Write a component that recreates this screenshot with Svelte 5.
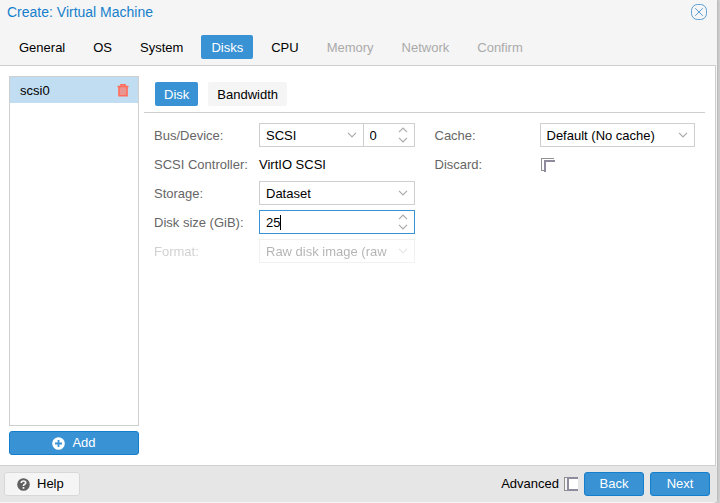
<script>
  const steps = [
    { name: 'General' },
    { name: 'OS' },
    { name: 'System' },
    { name: 'Disks', active: true },
    { name: 'CPU' },
    { name: 'Memory', disabled: true },
    { name: 'Network', disabled: true },
    { name: 'Confirm', disabled: true },
  ];
  let bus = $state('SCSI');
  let device = $state('0');
  let storage = $state('Dataset');
  let size = $state('25');
  let cache = $state('Default (No cache)');
  let discard = $state(false);
  let advanced = $state(false);
  let sizeInput;

  $effect(() => {
    sizeInput.focus();
    sizeInput.setSelectionRange(size.length, size.length);
  });
</script>

{#snippet chevron()}
  <svg class="arrow" width="10" height="6" viewBox="0 0 10 6" aria-hidden="true"><path d="M1 .8l4 4 4-4" /></svg>
{/snippet}

{#snippet spinner()}
  <svg class="arrow" width="10" height="16" viewBox="0 0 10 16" aria-hidden="true"><path d="M1 5.2l4-4 4 4M1 10.8l4 4 4-4" /></svg>
{/snippet}

<div class="page">
  <div class="dialog" role="dialog" aria-labelledby="title">
    <header>
      <h1 id="title">Create: Virtual Machine</h1>
      <button class="close" aria-label="Close">
        <svg width="16" height="16" viewBox="0 0 16 16"><rect x=".5" y=".5" width="15" height="15" rx="6" /><path d="M4.2 4.2l7.6 7.6M11.8 4.2l-7.6 7.6" /></svg>
      </button>
    </header>

    <nav>
      {#each steps as step}
        <button class="tab" class:active={step.active} disabled={step.disabled}>{step.name}</button>
      {/each}
    </nav>

    <main>
      <aside>
        <ul>
          <li>
            <span>scsi0</span>
            <button class="trash" aria-label="Remove scsi0">
              <svg width="12" height="13" viewBox="0 0 12 13"><path class="fill" d="M2 3h8v9H2z" /><path d="M.5 2.5h11M4 2V.8h4V2M2 3v8.7h8V3" /></svg>
            </button>
          </li>
        </ul>
        <button class="primary">
          <svg width="13" height="13" viewBox="0 0 13 13"><circle cx="6.5" cy="6.5" r="6.3" fill="#fff" /><path d="M6.5 3v7M3 6.5h7" stroke="#3892d4" stroke-width="1.8" /></svg>
          Add
        </button>
      </aside>

      <section>
        <div class="subtabs">
          <button class="tab active">Disk</button>
          <button class="tab idle">Bandwidth</button>
        </div>

        <form>
          <div class="column">
            <div class="row">
              <label for="bus">Bus/Device:</label>
              <div class="control">
                <div class="field bus"><select id="bus" bind:value={bus}><option>SCSI</option></select>{@render chevron()}</div>
                <div class="field device"><input aria-label="Device number" bind:value={device} />{@render spinner()}</div>
              </div>
            </div>
            <div class="row">
              <span class="name">SCSI Controller:</span>
              <span class="control">VirtIO SCSI</span>
            </div>
            <div class="row">
              <label for="storage">Storage:</label>
              <div class="control">
                <div class="field"><select id="storage" bind:value={storage}><option>Dataset</option></select>{@render chevron()}</div>
              </div>
            </div>
            <div class="row">
              <label for="size">Disk size (GiB):</label>
              <div class="control">
                <div class="field">
                  <input id="size" bind:value={size} bind:this={sizeInput} />
                  <span class="caret" style="left: calc(7px + {size.length}ch)"></span>
                  {@render spinner()}
                </div>
              </div>
            </div>
            <div class="row off">
              <label for="format">Format:</label>
              <div class="control">
                <div class="field"><select id="format" disabled><option>Raw disk image (raw</option></select>{@render chevron()}</div>
              </div>
            </div>
          </div>

          <div class="column">
            <div class="row">
              <label for="cache">Cache:</label>
              <div class="control">
                <div class="field"><select id="cache" bind:value={cache}><option>Default (No cache)</option></select>{@render chevron()}</div>
              </div>
            </div>
            <div class="row">
              <label for="discard">Discard:</label>
              <div class="control"><input id="discard" class="check corner" type="checkbox" bind:checked={discard} /></div>
            </div>
          </div>
        </form>
      </section>
    </main>

    <footer>
      <button class="help">
        <svg width="13" height="13" viewBox="0 0 13 13"><circle cx="6.5" cy="6.5" r="6.3" fill="#606060" /><path d="M4.3 5q0-2 2.2-2t2.2 1.8q0 1-1.1 1.5T6.5 8M6.5 9v1.8" fill="none" stroke="#f5f5f5" stroke-width="1.7" /></svg>
        Help
      </button>
      <label class="advanced">Advanced <input class="check" type="checkbox" bind:checked={advanced} /></label>
      <button class="primary">Back</button>
      <button class="primary">Next</button>
    </footer>
  </div>
</div>

<style>
  :global(body) {
    background: #d0d0d0;
  }
  .page,
  .page *,
  .page *::before {
    box-sizing: border-box;
  }
  .page {
    display: flex;
    min-height: 100vh;
    padding-right: 3px;
    font: 13px/16px "Liberation Sans", Arial, sans-serif;
    color: #000;
  }
  button,
  input,
  select {
    font: inherit;
    color: inherit;
    margin: 0;
  }
  button {
    cursor: pointer;
  }
  svg {
    flex: none;
    display: block;
  }
  .dialog {
    flex: 1;
    display: flex;
    flex-direction: column;
    min-width: 0;
    padding-bottom: 1px;
    background: #f5f5f5;
    border-radius: 0 0 4px 0;
    box-shadow: 0 0 3px #999;
  }
  header {
    display: flex;
    align-items: center;
    justify-content: space-between;
    height: 24px;
    padding: 0 10px 0 7px;
  }
  h1 {
    margin: 0;
    font-size: 14px;
    font-weight: normal;
    color: #157fcc;
  }
  .close,
  .trash {
    padding: 0;
    border: 0;
    background: none;
  }
  .close svg {
    fill: none;
    stroke: #5a9fd4;
  }
  nav {
    display: flex;
    gap: 8px;
    height: 41px;
    padding: 11px 9px 0;
  }
  .tab {
    height: 24px;
    padding: 2px 9px 0;
    border: 1px solid transparent;
    border-radius: 2px;
    background: none;
  }
  .tab:disabled {
    color: #aaa;
  }
  .tab.active {
    background: #3892d4;
    color: #fff;
  }
  .tab.idle {
    background: #f5f5f5;
  }
  main {
    flex: 1;
    display: flex;
    gap: 5px;
    margin-right: 1px;
    padding: 10px 10px 10px 9px;
    border: 1px solid #cfcfcf;
    border-left: 0;
    background: #fff;
  }
  aside {
    flex: none;
    display: flex;
    flex-direction: column;
    gap: 5px;
    width: 130px;
  }
  ul {
    flex: 1;
    margin: 0;
    padding: 0;
    border: 1px solid #cfcfcf;
    list-style: none;
  }
  li {
    display: flex;
    align-items: center;
    justify-content: space-between;
    height: 26px;
    padding: 0 9px 0 10px;
    background: #c1ddf1;
  }
  li span {
    padding-top: 2px;
  }
  .trash svg {
    fill: none;
    stroke: #ff6c59;
    stroke-width: 1.6;
  }
  .trash .fill {
    fill: #ea9590;
    stroke: none;
  }
  .primary {
    display: flex;
    align-items: center;
    justify-content: center;
    gap: 7px;
    height: 24px;
    padding: 0;
    border: 1px solid #157fcc;
    border-radius: 3px;
    background: #3892d4;
    color: #fff;
  }
  section {
    flex: 1;
    min-width: 0;
  }
  .subtabs {
    display: flex;
    gap: 10px;
    height: 37px;
    padding: 6px 11px 0;
    border-bottom: 1px solid #cfcfcf;
  }
  .subtabs .tab {
    padding: 2px 8px 0;
  }
  form {
    display: flex;
    gap: 20px;
    padding: 10px 10px 0;
  }
  .column {
    flex: 1;
    display: flex;
    flex-direction: column;
    gap: 5px;
    min-width: 0;
  }
  .row {
    display: flex;
    align-items: center;
    height: 24px;
  }
  .row label,
  .name {
    flex: none;
    width: 105px;
    padding-top: 2px;
    color: #666;
  }
  .control {
    flex: 1;
    display: flex;
    min-width: 0;
  }
  span.control {
    padding-top: 2px;
  }
  .field {
    position: relative;
    flex: 1;
    min-width: 0;
    height: 24px;
  }
  .device {
    flex: none;
    width: 52px;
    margin-left: -1px;
  }
  .field input,
  .field select {
    display: block;
    width: 100%;
    height: 24px;
    padding: 0 24px 0 6px;
    border: 1px solid #cfcfcf;
    border-radius: 0;
    outline: 0;
    background: #fff;
    appearance: none;
  }
  .field select {
    padding-top: 2px;
  }
  .field input:focus {
    border-color: #3892d4;
    caret-color: transparent;
  }
  .caret {
    display: none;
    position: absolute;
    top: 5px;
    width: 1px;
    height: 15px;
    background: #000;
    pointer-events: none;
  }
  input:focus + .caret {
    display: block;
  }
  .arrow {
    position: absolute;
    top: 0;
    right: 7px;
    bottom: 0;
    margin: auto 0;
    fill: none;
    stroke: #aaa;
    stroke-width: 1.2;
    pointer-events: none;
  }
  .off {
    opacity: 0.3;
  }
  .off select {
    color: #000;
    opacity: 1;
  }
  .check {
    position: relative;
    flex: none;
    width: 14px;
    height: 14px;
    border: 1px solid #919191;
    border-right: 0;
    appearance: none;
    background: #f5f5f5;
  }
  .check::before {
    content: "";
    position: absolute;
    top: -1px;
    left: 2px;
    width: 11px;
    height: 14px;
    border: solid #8f8b9c;
    border-width: 2px 0 2px 2px;
    background: #fff;
  }
  .check.corner {
    width: 13px;
    height: 13px;
    margin-left: 1px;
    background: #fff;
  }
  .check.corner::before {
    top: 1px;
    height: 12px;
    border-bottom: 0;
  }
  footer {
    display: flex;
    align-items: center;
    gap: 6px;
    height: 36px;
    padding: 0 7px 0 4px;
    background: #e6e6e6;
  }
  .help {
    display: flex;
    align-items: center;
    gap: 7px;
    height: 24px;
    margin-right: auto;
    padding: 0 15px 0 12px;
    border: 1px solid #d8d8d8;
    border-radius: 3px;
    background: #f5f5f5;
  }
  .advanced {
    display: flex;
    align-items: center;
    gap: 5px;
  }
  footer .primary {
    width: 60px;
  }
</style>
